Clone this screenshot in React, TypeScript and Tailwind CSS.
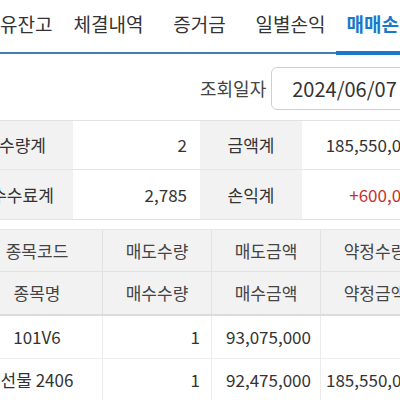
const tabs = ["보유잔고", "체결내역", "증거금", "일별손익", "매매손익"];

const summary = [
  ["수량계", "2", "금액계", "185,550,000", false],
  ["수수료계", "2,785", "손익계", "+600,000", true],
] as const;

const rows = [
  ["101V6", "1", "93,075,000", ""],
  ["선물 2406", "1", "92,475,000", "185,550,000"],
];

export default function App() {
  return (
    <div
      className="w-[400px] h-[400px] overflow-hidden bg-white text-[#333]"
      style={{ fontFamily: '"Noto Sans CJK KR", "Noto Sans", sans-serif' }}
    >
      <div className="w-[470px] ml-[-28px]">
        {/* Tabs */}
        <div className="flex h-[54px] border-b-2 border-[#3f80b0]">
          {tabs.map((t, i) => (
            <div
              key={t}
              className={
                i === 4
                  ? "w-[91px] flex items-center justify-center text-[19px] font-bold text-[#1b78c8] border-b-[4px] border-[#1b78c8] mb-[-3px] pb-[2px]"
                  : "w-[91px] flex items-center justify-center text-[19px] text-[#333] pb-[4px]"
              }
            >
              {t}
            </div>
          ))}
        </div>

        {/* Date */}
        <div className="flex items-center gap-[5px] pl-[228px] pt-[13px] pb-[10px]">
          <span className="text-[18px] text-[#444]">조회일자</span>
          <div className="w-[160px] h-[43px] rounded-[6px] border border-[#cfcfcf] flex items-center pl-[20px] text-[20px] text-[#333]">
            2024/06/07
          </div>
        </div>

        {/* Summary */}
        <div className="border-t border-b border-[#e2e2e2]">
          {summary.map(([l1, v1, l2, v2, red], i) => (
            <div
              key={l1}
              className={`grid grid-cols-[101px_127px_102px_123px] h-[49px] text-[17px] ${i === 0 ? "border-b border-[#e6e6e6]" : ""}`}
            >
              <div className="bg-[#f2f2f2] flex items-center justify-center">{l1}</div>
              <div className="flex items-center justify-end pr-[13px]">{v1}</div>
              <div className="bg-[#f2f2f2] flex items-center justify-center">{l2}</div>
              <div className={`flex items-center justify-end pr-[5px] ${red ? "text-[#c8302c]" : ""}`}>{v2}</div>
            </div>
          ))}
        </div>

        {/* Main table */}
        <div className="mt-[9px] border-t border-[#e6e6e6]">
          <div className="bg-[#f2f2f2] border-b-2 border-[#dcdcdc] text-[17px] text-[#444]">
            {[
              ["종목코드", "매도수량", "매도금액", "약정수량"],
              ["종목명", "매수수량", "매수금액", "약정금액"],
            ].map((r, i) => (
              <div
                key={i}
                className={`grid grid-cols-[130px_109px_109px_109px] h-[42px] ${i === 0 ? "border-b border-[#e2e2e2]" : ""}`}
              >
                {r.map((c, j) => (
                  <div
                    key={c}
                    className={`flex items-center justify-center ${j > 0 ? "border-l border-[#e2e2e2]" : ""}`}
                  >
                    {c}
                  </div>
                ))}
              </div>
            ))}
          </div>
          {rows.map((r, i) => (
            <div
              key={i}
              className="grid grid-cols-[130px_109px_109px_109px] h-[43px] text-[17px] border-b border-[#eeeeee]"
            >
              <div className="flex items-center justify-center">{r[0]}</div>
              <div className="flex items-center justify-end pr-[11px] border-l border-[#ececec]">{r[1]}</div>
              <div className="flex items-center justify-end pr-[9px] border-l border-[#ececec]">{r[2]}</div>
              <div className="flex items-center pl-[5px] border-l border-[#ececec]">{r[3]}</div>
            </div>
          ))}
        </div>
      </div>
    </div>
  );
}
